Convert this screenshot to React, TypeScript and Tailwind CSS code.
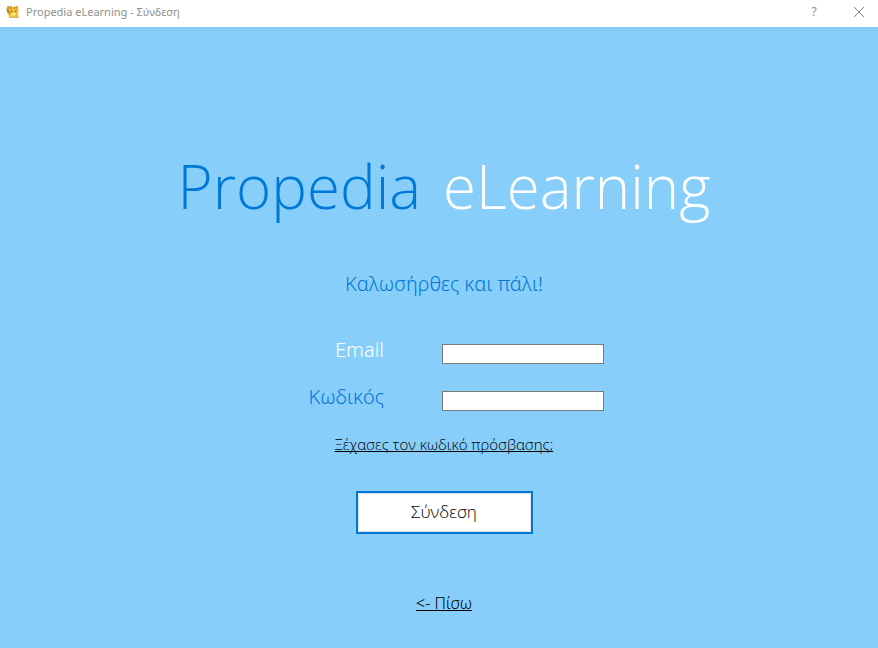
function AppIcon() {
  return (
    <svg width="14" height="14" viewBox="0 0 14 14" aria-hidden="true">
      <path d="M1 1h3l1.500 1h3L10 1h2l.5 5-.5 3 1 4H3l-.5-3L1 8z" fill="#f0c436" />
      <path d="M1 1h2.500l2 2-1 1.500L2 4zM12 1l-2.500 1.500L10 4l2-.5z" fill="#e0a02c" />
      <path d="M0 3l2.500 1.500L5 8 3.500 9 1 6.500z" fill="#b9814a" />
      <path d="M5 1.500h1V4H5zM8 1.500h1V4H8z" fill="#b98a2a" />
      <path d="M5 5.500h1.500v1.500H5zM9 5.500h1.500v1.500H9z" fill="#8a6420" />
      <path d="M5 8.500h5L8.500 10.500h-2z" fill="#fff3a0" />
      <path d="M3 12h10v1H3z" fill="#c9b68a" />
    </svg>
  );
}

function TitleBar() {
  return (
    <header className="flex h-[27px] items-center bg-white pb-[3px] pl-1.5 pr-[13px] font-['Noto_Sans',sans-serif] text-[#8f8f8f]">
      <AppIcon />
      <h1 className="ml-1.5 flex-1 text-[11px] leading-4">Propedia eLearning - Σύνδεση</h1>
      <button type="button" aria-label="Help" className="w-4 text-center text-[12px] leading-4">
        ?
      </button>
      <button type="button" aria-label="Close" className="ml-[31px]">
        <svg width="12" height="12" viewBox="0 0 12 12" fill="none" stroke="#808080">
          <path d="M1 1l10 10M11 1L1 11" />
        </svg>
      </button>
    </header>
  );
}

const field = "h-5 w-full border border-[#7a7a7a] bg-white px-1 text-[14px] text-black outline-none";

export default function App() {
  return (
    <div className="flex min-h-screen flex-col bg-[#87cefa] font-['Open_Sans','Noto_Sans',sans-serif]">
      <TitleBar />
      <main className="flex flex-col items-center pl-[10px] pt-[119px] font-light">
        <h2 className="flex gap-[22px] text-[60px] leading-[80px] text-[#0078d7]">
          <span>Propedia</span>
          <span className="text-white">eLearning</span>
        </h2>
        <p className="mt-11 font-['Noto_Sans',sans-serif] text-[20px] leading-7 text-[#0078d7]">
          Καλωσήρθες και πάλι!
        </p>
        <form className="mt-[38px] flex flex-col items-center" onSubmit={(e) => e.preventDefault()}>
          <div className="grid grid-cols-[100px_162px] gap-x-[58px] gap-y-[19px] font-['Noto_Sans',sans-serif] text-[20px] leading-7">
            <label htmlFor="email" className="text-right text-white">
              Email
            </label>
            <div className="flex items-end">
              <input id="email" type="email" className={field} />
            </div>
            <label htmlFor="password" className="text-right text-[#0078d7]">
              Κωδικός
            </label>
            <div className="flex items-end">
              <input id="password" type="password" className={field} />
            </div>
          </div>
          <a
            href="#forgot"
            className="mt-[23px] text-[15px] leading-5 text-black underline underline-offset-1 [text-decoration-skip-ink:none]"
          >
            Ξέχασες τον κωδικό πρόσβασης;
          </a>
          <button
            type="submit"
            className="mt-[37px] h-[43px] w-[177px] border-2 border-[#0078d7] bg-white pb-0.5 text-[17px] leading-6 text-black ring-1 ring-inset ring-[#e1e1e1]"
          >
            Σύνδεση
          </button>
        </form>
        <a
          href="#back"
          className="mt-[59px] font-['Noto_Sans',sans-serif] text-[16px] leading-5 text-black underline underline-offset-1 [text-decoration-skip-ink:none]"
        >
          &lt;- Πίσω
        </a>
      </main>
    </div>
  );
}
